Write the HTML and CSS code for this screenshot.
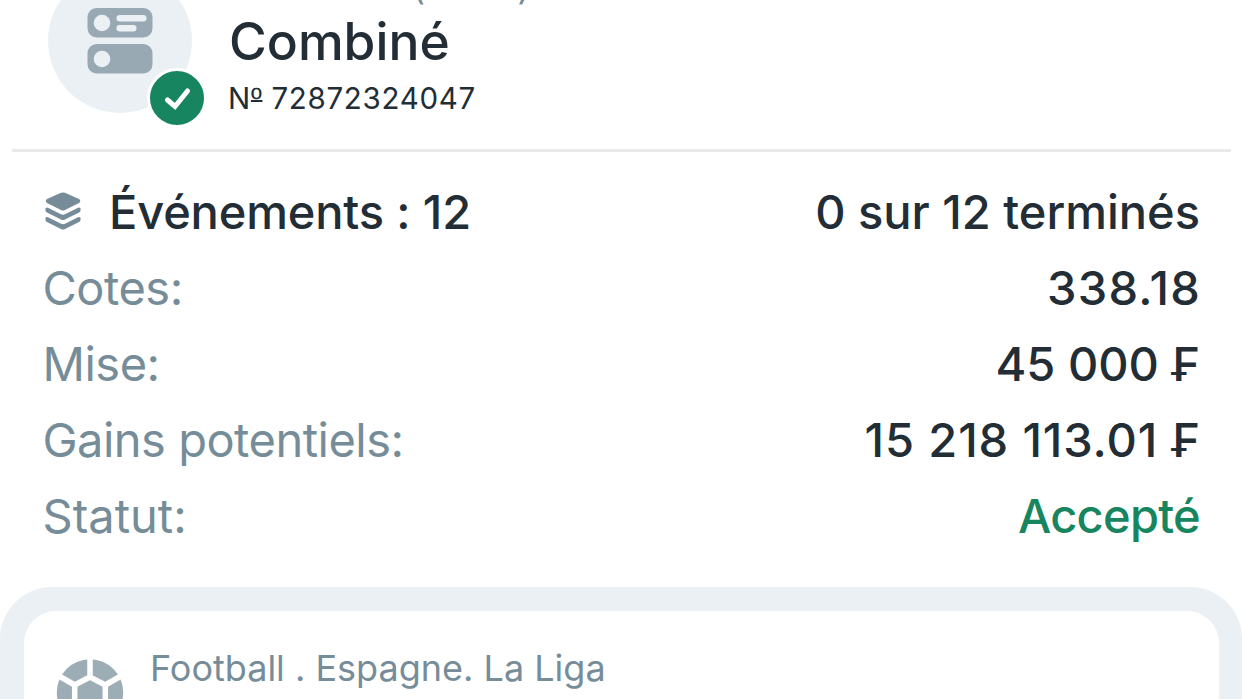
FILE: index.html
```html
<!DOCTYPE html>
<html lang="fr">
<head>
  <meta charset="utf-8">
  <title>Combiné</title>
  <meta name="viewport" content="width=device-width, initial-scale=1">
  <link rel="stylesheet" href="styles.css">
</head>
<body>
  <header class="bet-header">
    <div class="avatar">
      <svg class="avatar-icon" viewBox="0 0 66 66">
        <rect x="0.500" y="0" width="65" height="29.500" rx="9" fill="#98a9b3"/>
        <rect x="0.500" y="36" width="65" height="29.500" rx="9" fill="#98a9b3"/>
        <g fill="#eaf0f4">
          <circle cx="15" cy="15" r="8.3"/>
          <circle cx="15" cy="51" r="8.3"/>
          <rect x="29.500" y="7" width="30" height="6.5" rx="3.2"/>
          <rect x="29.500" y="17" width="20" height="6.5" rx="3.2"/>
        </g>
      </svg>
      <span class="badge">
        <svg viewBox="0 0 54 54"><path d="M17.500 29 L25 35.500 L37.500 20" fill="none" stroke="#fff" stroke-width="5" stroke-linecap="round"/></svg>
      </span>
    </div>
    <div class="bet-title">
      <p class="date">10.11.2025 (12:32)</p>
      <h1>Combiné</h1>
      <p class="number">N<span class="ordinal">º</span> 72872324047</p>
    </div>
  </header>

  <section class="details">
    <div class="row">
      <span class="events">
        <svg class="layers" viewBox="0 0 36 38">
          <path d="M16 .8 Q18 0 20 .8 L34 7 Q36.500 9 34 11 L20 18 Q18 19 16 18 L2 11 Q-.5 9 2 7Z"/>
          <path d="M.5 16 Q2 15 3.500 16 L16 22.300 Q18 23.200 20 22.300 L32.500 16 Q34 15 35.500 16 V18.500 Q35.500 20 34 20.500 L20 27.500 Q18 28.500 16 27.500 L2 20.500 Q.5 20 .5 18.500Z"/>
          <path d="M.5 25.500 Q2 24.500 3.500 25.500 L16 31.800 Q18 32.700 20 31.800 L32.500 25.500 Q34 24.500 35.500 25.500 V28 Q35.500 29.500 34 30 L20 37 Q18 38 16 37 L2 30 Q.5 29.500 .5 28Z"/>
        </svg>
        <b>Événements : 12</b>
      </span>
      <b>0 sur 12 terminés</b>
    </div>
    <div class="row"><span class="label">Cotes:</span><b class="odds">338.18</b></div>
    <div class="row"><span class="label">Mise:</span><b>45 000 ₣</b></div>
    <div class="row"><span class="label">Gains potentiels:</span><b class="winnings">15 218 113.01 ₣</b></div>
    <div class="row"><span class="label status">Statut:</span><b class="accepted">Accepté</b></div>
  </section>

  <section class="games">
    <div class="game">
      <svg class="ball" viewBox="0 0 68 68">
        <circle cx="34" cy="33.500" r="33.200" fill="#9dadb5"/>
        <g fill="none" stroke="#fff" stroke-width="5.500">
          <path d="M34 0 V18 M34 18 L18.700 26 V46 L34 54 L49.300 46 V26 Z"/>
          <path d="M18.700 26 L3 17 M49.300 26 L65 17 M18.700 46 L6 55 M49.300 46 L62 55"/>
        </g>
      </svg>
      <span class="league">Football . Espagne. La Liga</span>
    </div>
  </section>
</body>
</html>
```
FILE: styles.css
```css
* {
  box-sizing: border-box;
}
body {
  margin: 0;
  height: 699px;
  overflow: hidden;
  background: #fff;
  color: #222d35;
  font-family: Inter, "Liberation Sans", sans-serif;
}
p, h1 {
  margin: 0;
}
svg {
  display: block;
}
.bet-header {
  display: flex;
  height: 152px;
  margin: 0 11px 0 12px;
  padding-left: 36px;
  border-bottom: 3px solid #e7e9ea;
}
.avatar {
  position: relative;
  flex: none;
  width: 144px;
  height: 144px;
  margin-top: -31px;
  border-radius: 50%;
  background: #eaf0f4;
}
.avatar-icon {
  width: 66px;
  height: 66px;
  margin: 39px 0 0 39px;
}
.badge {
  position: absolute;
  left: 99px;
  top: 98.500px;
  width: 60px;
  height: 60px;
  border: 3px solid #fff;
  border-radius: 50%;
  background: #178560;
}
.bet-title {
  margin: -34px 0 0 37px;
  white-space: nowrap;
}
.date {
  height: 43px;
  line-height: 44px;
  font-size: 33.500px;
  letter-spacing: 1.300px;
  color: #768d99;
}
h1 {
  height: 65px;
  line-height: 64px;
  font-size: 51.500px;
  font-weight: 500;
}
.number {
  margin-left: -1px;
  line-height: 48px;
  font-size: 29.500px;
  letter-spacing: .7px;
}
.ordinal {
  font-family: "Liberation Sans", sans-serif;
  text-decoration: underline;
  text-decoration-thickness: 2px;
  text-decoration-skip-ink: none;
  text-underline-offset: -9px;
}
.details {
  height: 435px;
  padding: 21px 42px 0 43px;
}
.row {
  display: flex;
  justify-content: space-between;
  align-items: center;
  height: 76.200px;
  font-size: 47px;
  color: #768d99;
  white-space: nowrap;
}
.row b {
  font-weight: 500;
  color: #222d35;
}
.row .accepted {
  color: #178560;
  letter-spacing: -.7px;
}
.row .odds {
  letter-spacing: 1.200px;
  margin-right: -1px;
}
.row .winnings {
  letter-spacing: .9px;
  margin-right: -1px;
}
.label {
  margin-left: -.5px;
  letter-spacing: -.5px;
}
.label.status {
  letter-spacing: 0;
}
.events {
  display: flex;
  align-items: center;
  gap: 28px;
  letter-spacing: -.15px;
}
.layers {
  width: 36px;
  height: 38px;
  margin-left: 2px;
  fill: #768d99;
}
.games {
  height: 112px;
  padding: 24px 23px 0 24px;
  border-radius: 52px 52px 0 0;
  background: #eaf0f4;
  overflow: hidden;
}
.game {
  display: flex;
  height: 88px;
  padding: 32px 32px 0;
  border-radius: 32px 32px 0 0;
  background: #fff;
  overflow: hidden;
}
.ball {
  flex: none;
  width: 68px;
  height: 68px;
  margin-top: 16px;
}
.league {
  margin-left: 26px;
  height: 50px;
  line-height: 51px;
  font-size: 36px;
  color: #768d99;
}
```
